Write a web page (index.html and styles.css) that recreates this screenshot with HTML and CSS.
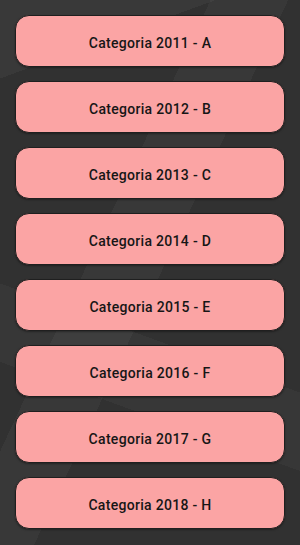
FILE: index.html
```html
<!DOCTYPE html>
<html lang="pt">
<head>
  <meta charset="UTF-8">
  <title>Categorias</title>
  <link rel="stylesheet" href="styles.css">
</head>
<body>
  <div class="list">
    <button class="cat">Categoria 2011 - A</button>
    <button class="cat">Categoria 2012 - B</button>
    <button class="cat">Categoria 2013 - C</button>
    <button class="cat">Categoria 2014 - D</button>
    <button class="cat">Categoria 2015 - E</button>
    <button class="cat">Categoria 2016 - F</button>
    <button class="cat">Categoria 2017 - G</button>
    <button class="cat">Categoria 2018 - H</button>
  </div>
</body>
</html>
```
FILE: styles.css
```css
*{
  padding: 0;
  margin: 0;
  box-sizing: border-box;
}
html, body{
  width: 300px;
  height: 545px;
  overflow: hidden;
}
body{
  background-color: #313131;
  background-image:
    linear-gradient(115deg, transparent 0 38%, rgba(255,255,255,0.035) 38% 52%, transparent 52%),
    linear-gradient(200deg, transparent 0 60%, rgba(255,255,255,0.03) 60% 72%, transparent 72%),
    linear-gradient(160deg, rgba(255,255,255,0.04) 0 12%, transparent 12%);
  font-family: Roboto, "Liberation Sans", sans-serif;
}
.list{
  display: flex;
  flex-direction: column;
  gap: 14px;
  padding: 15px 15px 16px;
}
.cat{
  height: 52px;
  width: 100%;
  padding-top: 3px;
  background-color: #fba4a4;
  border: 1px solid #1f1f1f;
  border-radius: 14px;
  box-shadow: 0 1px 2px rgba(0,0,0,0.35);
  color: #161616;
  font-family: Roboto, "Liberation Sans", sans-serif;
  font-size: 14px;
  font-weight: 500;
  letter-spacing: 0.3px;
  text-align: center;
}
```
